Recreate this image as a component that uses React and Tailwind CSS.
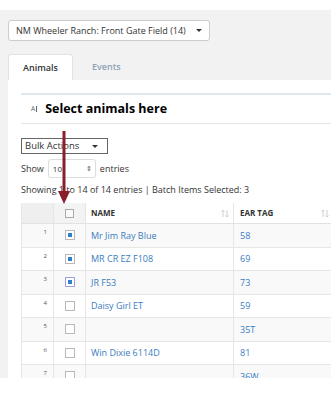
import React from "react";

const rows = [
  { n: 1, name: "Mr Jim Ray Blue", tag: "58", checked: true },
  { n: 2, name: "MR CR EZ F108", tag: "69", checked: true },
  { n: 3, name: "JR F53", tag: "73", checked: true, focus: true },
  { n: 4, name: "Daisy Girl ET", tag: "59" },
  { n: 5, name: "", tag: "35T" },
  { n: 6, name: "Win Dixie 6114D", tag: "81" },
  { n: 7, name: "", tag: "36W" },
];

function SortIcon() {
  return (
    <svg width="8" height="9" viewBox="0 0 8 9" className="text-[#cfcfcf]">
      <path d="M2 1v7M0.5 2.5L2 1l1.5 1.5M6 1v7M4.5 6.5L6 8l1.5-1.5" stroke="currentColor" strokeWidth="1" fill="none" />
    </svg>
  );
}

function Check({ checked, focus }) {
  return (
    <span
      className={`flex h-[10px] w-[10px] items-center justify-center border-[1.5px] bg-white ${
        focus ? "border-[#9aa0e0]" : "border-[#b8b8b8]"
      }`}
    >
      {checked && <span className="h-[4px] w-[4px] bg-[#2f7fd1]" />}
    </span>
  );
}

export default function App() {
  return (
    <div className="relative h-[396px] w-[331px] overflow-hidden bg-white font-['Open_Sans',sans-serif] text-[#333]">
      <div className="mt-[10px] flex h-[368px] flex-col bg-[#f2f2f2] pl-[8px]">
        <div className="mt-[10px] flex h-[21px] w-[202px] items-center justify-between whitespace-nowrap rounded-[3px] border border-[#ccc] bg-white pl-[7px] pr-[7px] text-[9px]">
          <span>NM Wheeler Ranch: Front Gate Field (14)</span>
          <span className="h-0 w-0 border-x-[3px] border-t-[3px] border-x-transparent border-t-[#333]" />
        </div>

        <div className="mt-[13px] flex h-[26px] items-end">
          <div className="flex h-[26px] w-[65px] items-center justify-center rounded-t-[3px] border border-b-0 border-[#e2e2e2] bg-white text-[9px] font-semibold text-[#333]">
            Animals
          </div>
          <div className="flex h-[26px] items-center pl-[19px] text-[9px] font-semibold text-[#8fa3b8]">Events</div>
        </div>

        <div className="flex-1 overflow-hidden bg-white pl-[13px] pt-[13px]">
          <div className="flex h-[31px] items-center border-t-2 border-b border-t-[#dfe6ec] border-b-[#e6e6e6] pl-[10px]">
            <span className="flex items-center text-[6.5px] text-[#666]">
              A<span className="ml-[1px] inline-block h-[6px] w-[1px] bg-[#666]" />
            </span>
            <span className="ml-[8px] text-[12.5px] font-bold text-black">Select animals here</span>
          </div>

          <div className="mt-[14px] flex h-[16px] w-[87px] items-center justify-between whitespace-nowrap border border-[#666] pl-[3px] pr-[9px] text-[9.5px] text-[#333]">
            <span>Bulk Actions</span>
            <span className="h-0 w-0 border-x-[3px] border-t-[3px] border-x-transparent border-t-[#333]" />
          </div>

          <div className="mt-[5px] flex h-[19px] items-center text-[9px] text-[#333]">
            <span>Show</span>
            <div className="ml-[4px] flex h-[19px] w-[48px] items-center justify-between rounded-[3px] border border-[#ddd] pl-[4px] pr-[3px] text-[8px]">
              <span>10</span>
              <span className="text-[7px] leading-none text-[#555]">⇕</span>
            </div>
            <span className="ml-[4px]">entries</span>
          </div>

          <div className="mt-[6px] whitespace-nowrap text-[9px] leading-[12px] text-[#333]">
            Showing 1 to 14 of 14 entries | Batch Items Selected: 3
          </div>

          <div className="mt-[7px] w-[420px] border-l border-[#e6e6e6]">
            <div className="flex h-[21px] border-b border-[#e2e2e2] text-[8px] font-bold text-[#333]">
              <div className="w-[32px] border-r border-[#e6e6e6] bg-[#efefef]" />
              <div className="flex w-[32px] items-center justify-center border-r border-[#e6e6e6] bg-[#f3f3f3]">
                <span className="h-[9px] w-[9px] border border-[#aaa] bg-[#fafafa]" />
              </div>
              <div className="flex w-[148px] items-center justify-between border-r border-[#e6e6e6] pl-[5px] pr-[4px]">
                <span>NAME</span>
                <SortIcon />
              </div>
              <div className="flex w-[98px] items-center justify-between pl-[6px] pr-[3px]">
                <span>EAR TAG</span>
                <SortIcon />
              </div>
            </div>
            {rows.map((r) => (
              <div
                key={r.n}
                className={`flex h-[23.5px] border-b border-[#e6e6e6] text-[9px] text-[#3a7cc0] ${
                  r.n % 2 ? "bg-[#f9f9f9]" : "bg-white"
                }`}
              >
                <div className="w-[32px] border-r border-[#e6e6e6] pr-[6px] pt-[5px] text-right text-[6px] leading-none text-[#555]">
                  {r.n}
                </div>
                <div className="flex w-[32px] items-center justify-center border-r border-[#e6e6e6]">
                  <Check checked={r.checked} focus={r.focus} />
                </div>
                <div className="flex w-[148px] items-center border-r border-[#e6e6e6] pl-[5px]">{r.name}</div>
                <div className="flex w-[98px] items-center pl-[6px]">{r.tag}</div>
              </div>
            ))}
          </div>
        </div>
      </div>

      <svg className="absolute left-[56px] top-[130px]" width="16" height="76" viewBox="0 0 16 76">
        <rect x="6.5" y="1" width="3" height="62" fill="#8b1e2b" />
        <path d="M2 61 L14 61 L8 74 Z" fill="#8b1e2b" />
      </svg>
    </div>
  );
}
